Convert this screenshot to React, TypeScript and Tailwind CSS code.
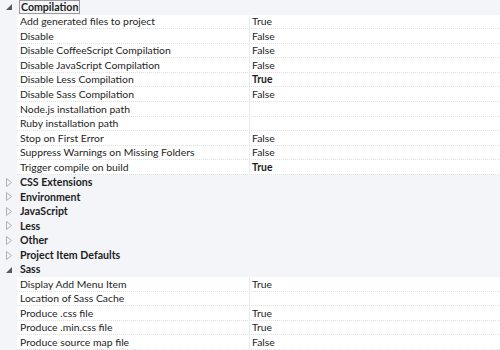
import React from "react";

type Prop = { name: string; value?: string; bold?: boolean };
type Cat = { name: string; open: boolean; props?: Prop[]; selected?: boolean };

const cats: Cat[] = [
  {
    name: "Compilation",
    open: true,
    selected: true,
    props: [
      { name: "Add generated files to project", value: "True" },
      { name: "Disable", value: "False" },
      { name: "Disable CoffeeScript Compilation", value: "False" },
      { name: "Disable JavaScript Compilation", value: "False" },
      { name: "Disable Less Compilation", value: "True", bold: true },
      { name: "Disable Sass Compilation", value: "False" },
      { name: "Node.js installation path" },
      { name: "Ruby installation path" },
      { name: "Stop on First Error", value: "False" },
      { name: "Suppress Warnings on Missing Folders", value: "False" },
      { name: "Trigger compile on build", value: "True", bold: true },
    ],
  },
  { name: "CSS Extensions", open: false },
  { name: "Environment", open: false },
  { name: "JavaScript", open: false },
  { name: "Less", open: false },
  { name: "Other", open: false },
  { name: "Project Item Defaults", open: false },
  {
    name: "Sass",
    open: true,
    props: [
      { name: "Display Add Menu Item", value: "True" },
      { name: "Location of Sass Cache" },
      { name: "Produce .css file", value: "True" },
      { name: "Produce .min.css file", value: "True" },
      { name: "Produce source map file", value: "False" },
    ],
  },
];

function Expander({ open }: { open: boolean }) {
  if (open) {
    return (
      <svg width="6" height="6" viewBox="0 0 6 6" className="block">
        <polygon points="6,0 6,6 0,6" fill="#595959" />
      </svg>
    );
  }
  return (
    <svg width="6" height="9" viewBox="0 0 6 9" className="block">
      <polygon points="0.5,0.5 5.5,4.5 0.5,8.5" fill="none" stroke="#b0b0b0" strokeWidth="1" />
    </svg>
  );
}

export default function App() {
  return (
    <div
      className="w-[500px] h-[350px] overflow-hidden bg-white text-[10.4px] text-[#1e1e1e] leading-none"
      style={{ fontFamily: 'Lato, "Open Sans", sans-serif' }}
    >
      {cats.map((cat) => (
        <div key={cat.name}>
          {/* Category header */}
          <div className="flex h-[14.58px] items-center bg-[#f3f5f9]">
            <div className="w-[17px] flex justify-center items-center pl-[1px]">
              <Expander open={cat.open} />
            </div>
            <span
              className={`font-bold text-[10.6px] ml-[2px] px-[1px] ${
                cat.selected ? "border border-[#9a9a9a] h-[14px] flex items-center" : ""
              }`}
            >
              {cat.name}
            </span>
          </div>
          {/* Properties */}
          {cat.open &&
            cat.props?.map((p) => (
              <div key={p.name} className="flex h-[14.58px]">
                <div className="w-[17px] bg-[#f3f5f9]" />
                <div className="flex flex-1 border-b border-dotted border-[#e0e0e0]">
                  <div className="w-[233px] flex items-center pl-[3px] border-r border-[#e8ecf2]">
                    {p.name}
                  </div>
                  <div className={`flex-1 flex items-center pl-[2px] ${p.bold ? "font-bold" : ""}`}>
                    {p.value ?? ""}
                  </div>
                </div>
              </div>
            ))}
        </div>
      ))}
    </div>
  );
}
